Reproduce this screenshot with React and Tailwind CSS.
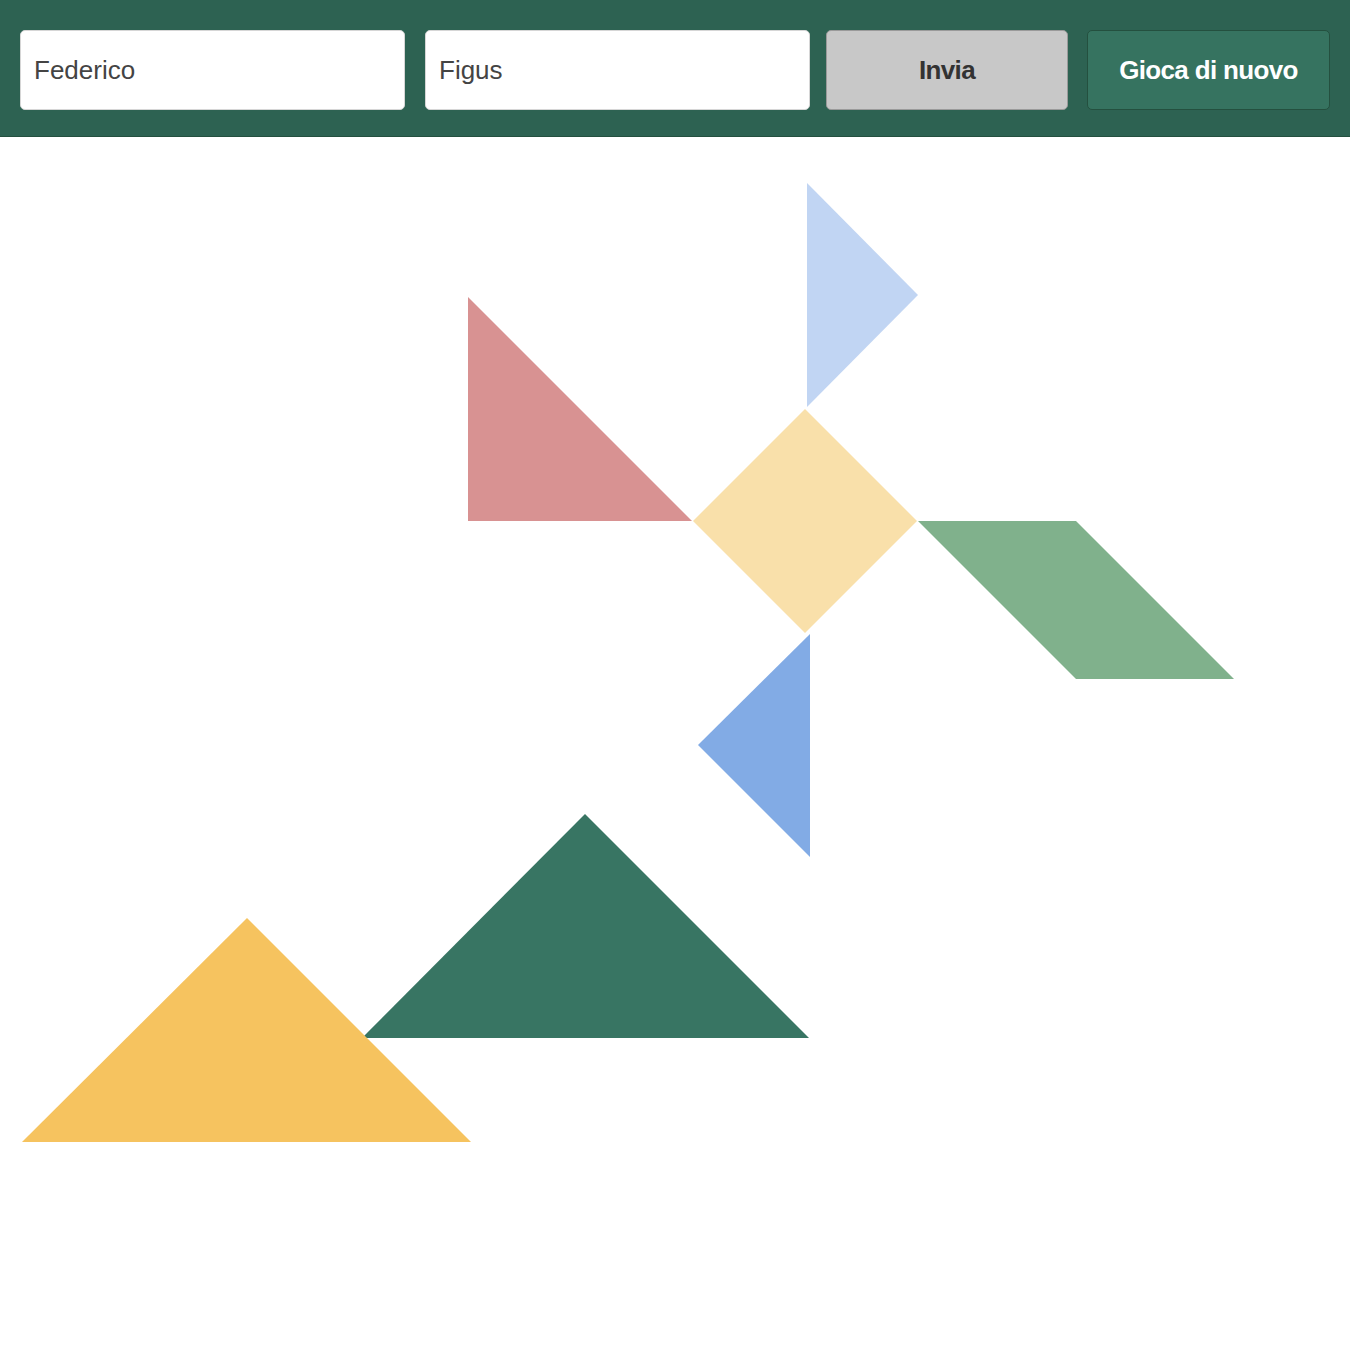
import React from 'react'

const pieces = [
  { id: 'small-top', fill: '#c1d5f3', points: '807,183 918,295 807,407' },
  { id: 'medium', fill: '#d89292', points: '468,297 692,521 468,521' },
  { id: 'square', fill: '#f9e0aa', points: '805,409 917,521 805,633 693,521' },
  { id: 'para', fill: '#80b18c', points: '918,521 1076,521 1234,679 1076,679' },
  { id: 'small-bottom', fill: '#82abe5', points: '810,634 810,857 698,745' },
  { id: 'big-green', fill: '#387563', points: '585,814 809,1038 362,1038' },
  { id: 'big-yellow', fill: '#f6c35f', points: '247,918 471,1142 22,1142' },
]

export default function App() {
  return (
    <div className="min-h-[1350px] bg-white font-['Liberation_Sans',Arial,sans-serif]">
      {/* barra in alto */}
      <div className="flex h-[137px] items-start gap-5 border-b border-[#24503f] bg-[#2d6252] px-5 pt-[30px]">
        <input
          className="h-[80px] w-[386px] rounded-[5px] border border-[#d6d6d6] bg-white px-[13px] text-[26px] text-[#444] outline-none"
          defaultValue="Federico"
        />
        <input
          className="h-[80px] w-[386px] rounded-[5px] border border-[#d6d6d6] bg-white px-[13px] text-[26px] text-[#444] outline-none"
          defaultValue="Figus"
        />
        <div className="ml-[-4px] flex gap-[19px]">
          <button className="h-[80px] w-[242px] rounded-[5px] border border-[#9a9a9a] bg-[#c8c8c8] text-[26px] font-bold tracking-tight text-[#333]">
            Invia
          </button>
          <button className="h-[80px] w-[243px] rounded-[5px] border border-[#24503f] bg-[#367360] text-[26px] font-bold tracking-tight text-white">
            Gioca di nuovo
          </button>
        </div>
      </div>

      {/* area di gioco */}
      <svg width="1350" height="1213" viewBox="0 137 1350 1213" className="block">
        {pieces.map(p => (
          <polygon key={p.id} points={p.points} fill={p.fill} />
        ))}
      </svg>
    </div>
  )
}
